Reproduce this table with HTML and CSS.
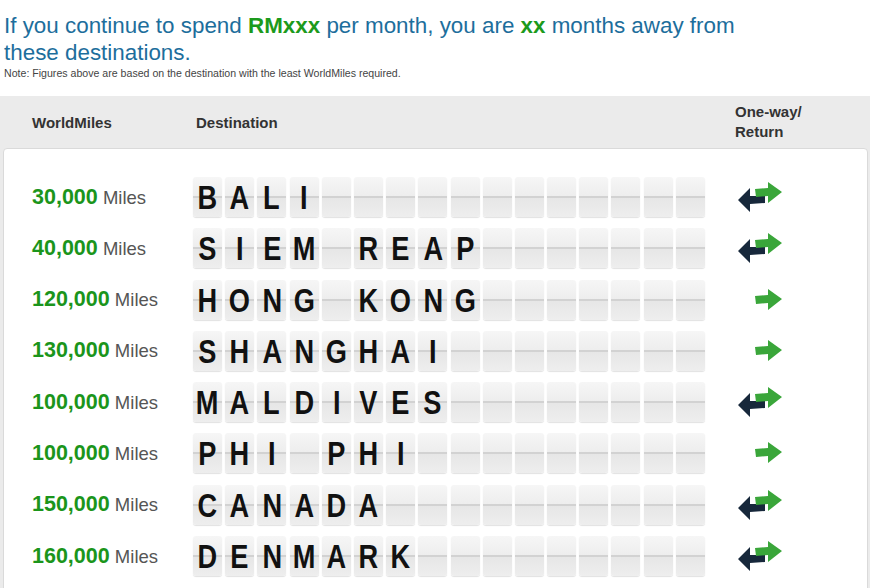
FILE: index.html
```html
<!DOCTYPE html>
<html>
<head>
<meta charset="utf-8">
<link rel="stylesheet" href="styles.css">
</head>
<body>
<div class="intro">
  <h1 class="title">If you continue to spend <span class="hl">RMxxx</span> per month, you are <span class="hl">xx</span> months away from these destinations.</h1>
  <p class="note">Note: Figures above are based on the destination with the least WorldMiles required.</p>
</div>
<div class="board">
  <div class="head">
    <div class="h-miles">WorldMiles</div>
    <div class="h-dest">Destination</div>
    <div class="h-type">One-way/<br>Return</div>
  </div>
  <div class="card" id="card"></div>
</div>
<script src="app.js"></script>
</body>
</html>
```
FILE: styles.css
```css
* { box-sizing: border-box; }
html, body { margin: 0; padding: 0; background: #fff; overflow: hidden; }
body { font-family: "Liberation Sans", Arial, sans-serif; width: 870px; height: 588px; }
.intro { padding: 12px 4px 0 4px; }
.title { margin: 0; font-weight: normal; font-size: 22.4px; line-height: 27px; color: #1d6e9c; width: 745px; }
.title .hl { color: #1c9a1c; font-weight: bold; }
.note { margin: 1px 0 0 0; font-size: 10.6px; color: #444; line-height: 13px; }
.board { margin-top: 16px; background: #ebebeb; }
.head { display: grid; grid-template-columns: 193px 542px 1fr; height: 52px; align-items: center; }
.h-miles { padding-left: 32px; font-weight: bold; font-size: 15px; color: #333; }
.h-dest { padding-left: 3px; font-weight: bold; font-size: 15px; color: #333; }
.h-type { font-weight: bold; font-size: 15px; color: #333; line-height: 20px; }
.card { margin: 0 2px 0 3px; background: #fff; border: 1px solid #dadada; border-radius: 4px 4px 0 0; padding: 28px 0 20px 0; display: flex; flex-direction: column; gap: 11.3px; }
.row { display: grid; grid-template-columns: 189px 515px 1fr; height: 40px; align-items: center; }
.miles { padding-left: 28px; font-size: 18.5px; color: #555; white-space: nowrap; }
.miles b { color: #1b951b; font-size: 21.5px; }
.tiles { display: flex; gap: 3.2px; height: 40px; }
.tile { position: relative; width: 29px; height: 40px; border-radius: 3px; background: linear-gradient(#f6f6f6, #ededed 50%, #e6e6e6 50%, #eeeeee); box-shadow: 0 1px 1px rgba(0,0,0,0.12); display: flex; align-items: center; justify-content: center; font-weight: bold; font-size: 34px; color: #111; overflow: hidden; }
.tile::before { content: ""; position: absolute; left: 0; right: 0; top: 19px; height: 2px; background: #d2d2d2; }
.tile span { position: relative; z-index: 1; display: inline-block; transform: scaleX(0.8); line-height: 40px; }
.arrow { display: flex; align-items: center; padding-left: 29px; }
.arrow svg { display: block; }
```
FILE: app.js
```js
var data = [
  ["30,000", "BALI", 1],
  ["40,000", "SIEM REAP", 1],
  ["120,000", "HONG KONG", 0],
  ["130,000", "SHANGHAI", 0],
  ["100,000", "MALDIVES", 1],
  ["100,000", "PHI PHI", 0],
  ["150,000", "CANADA", 1],
  ["160,000", "DENMARK", 1]
];
var ret = '<svg width="46" height="32" viewBox="0 0 46 32"><polygon points="28,15 13,15 13,7 1,19 13,31 13,23 28,22" fill="#17283b"/><polygon points="18,8 31,7 31,1 45,11 31,22 31,15 19,16" fill="#3aa63a"/></svg>';
var one = '<svg width="46" height="32" viewBox="0 0 46 32"><polygon points="18,12 31,11 31,5 45,15 31,26 31,19 19,20" fill="#3aa63a"/></svg>';
var card = document.getElementById("card");
data.forEach(function (d) {
  var row = document.createElement("div");
  row.className = "row";
  var html = '<div class="miles"><b>' + d[0] + '</b> Miles</div><div class="tiles">';
  for (var i = 0; i < 16; i++) {
    var ch = d[1][i] || "";
    if (ch === " ") ch = "";
    html += '<div class="tile"><span>' + ch + '</span></div>';
  }
  html += '</div><div class="arrow">' + (d[2] ? ret : one) + '</div>';
  row.innerHTML = html;
  card.appendChild(row);
});
```
